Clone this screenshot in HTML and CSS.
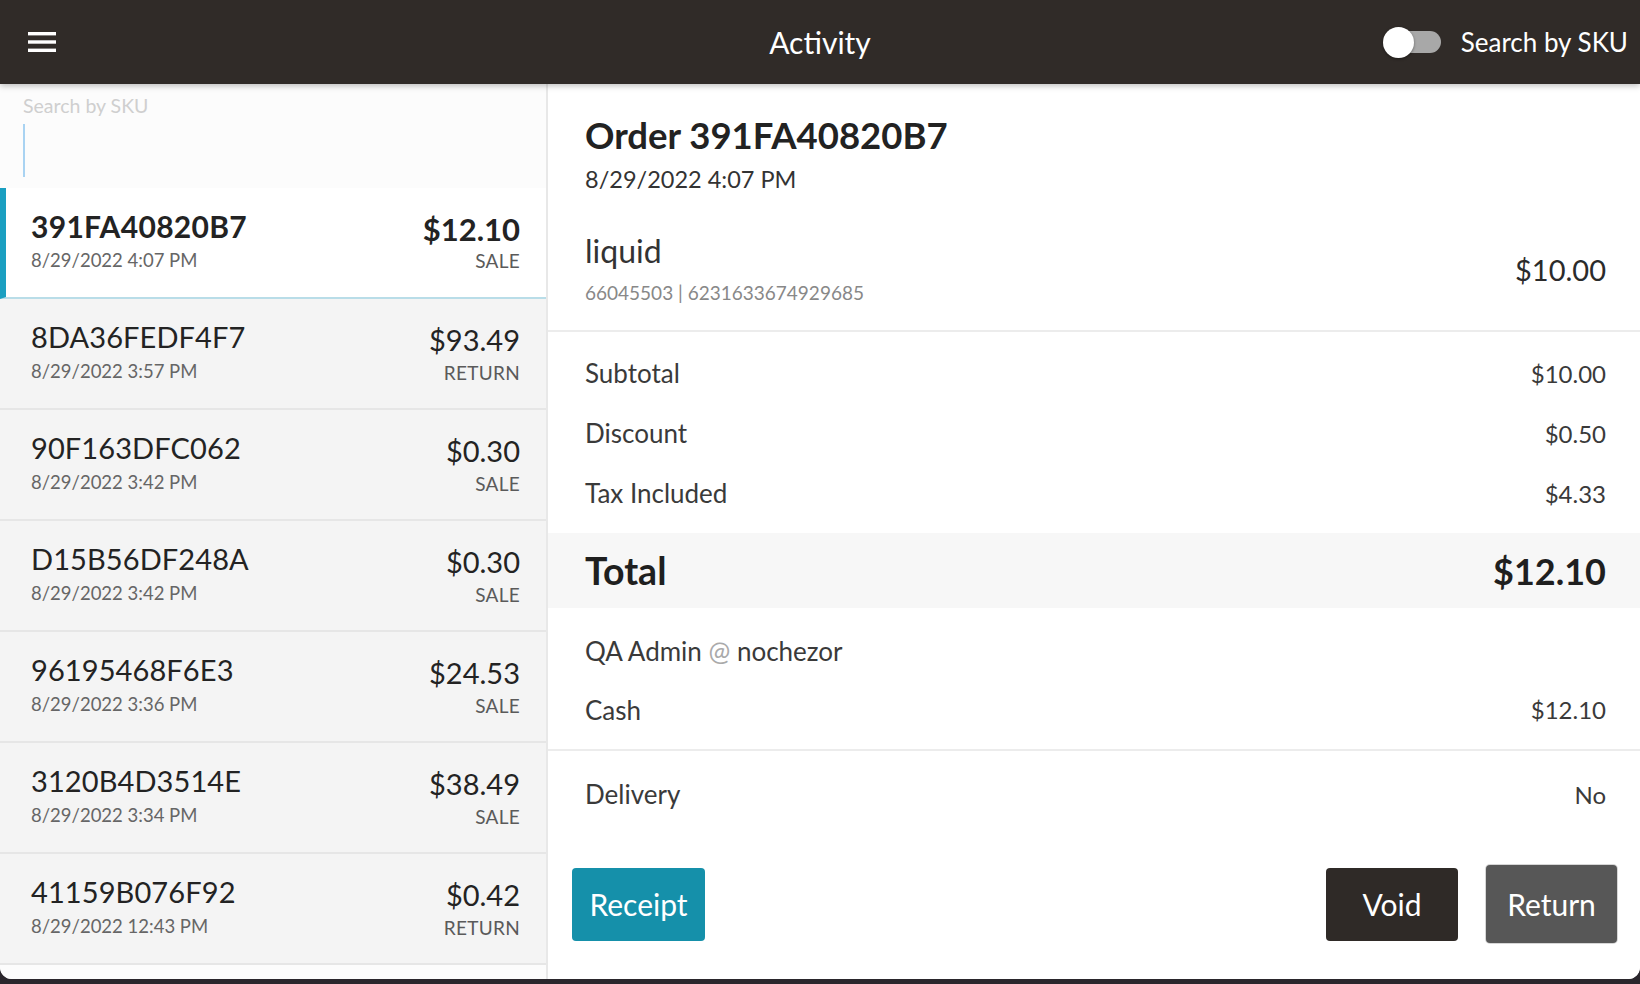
FILE: index.html
```html
<!DOCTYPE html>
<html lang="en">
<head>
<meta charset="utf-8">
<title>Activity</title>
<link rel="stylesheet" href="styles.css">
</head>
<body>
<div class="app">
  <header class="topbar">
    <div class="topbar-left">
      <svg class="hamburger" width="28" height="20" viewBox="0 0 28 20" aria-hidden="true">
        <rect x="0" y="0" width="28" height="3.4" fill="#fff"/>
        <rect x="0" y="8.3" width="28" height="3.4" fill="#fff"/>
        <rect x="0" y="16.6" width="28" height="3.4" fill="#fff"/>
      </svg>
    </div>
    <div class="topbar-title">Activity</div>
    <div class="topbar-right">
      <span class="toggle"><span class="toggle-knob"></span></span>
      <span class="toggle-label">Search by SKU</span>
    </div>
  </header>

  <main class="main">
    <aside class="sidebar">
      <div class="search">
        <div class="search-placeholder">Search by SKU</div>
        <div class="search-cursor"></div>
      </div>
      <ul class="orders">
        <li class="order selected">
          <div class="order-left">
            <div class="order-id">391FA40820B7</div>
            <div class="order-date">8/29/2022 4:07 PM</div>
          </div>
          <div class="order-right">
            <div class="order-amount">$12.10</div>
            <div class="order-type">SALE</div>
          </div>
        </li>
        <li class="order">
          <div class="order-left">
            <div class="order-id">8DA36FEDF4F7</div>
            <div class="order-date">8/29/2022 3:57 PM</div>
          </div>
          <div class="order-right">
            <div class="order-amount">$93.49</div>
            <div class="order-type">RETURN</div>
          </div>
        </li>
        <li class="order">
          <div class="order-left">
            <div class="order-id">90F163DFC062</div>
            <div class="order-date">8/29/2022 3:42 PM</div>
          </div>
          <div class="order-right">
            <div class="order-amount">$0.30</div>
            <div class="order-type">SALE</div>
          </div>
        </li>
        <li class="order">
          <div class="order-left">
            <div class="order-id">D15B56DF248A</div>
            <div class="order-date">8/29/2022 3:42 PM</div>
          </div>
          <div class="order-right">
            <div class="order-amount">$0.30</div>
            <div class="order-type">SALE</div>
          </div>
        </li>
        <li class="order">
          <div class="order-left">
            <div class="order-id">96195468F6E3</div>
            <div class="order-date">8/29/2022 3:36 PM</div>
          </div>
          <div class="order-right">
            <div class="order-amount">$24.53</div>
            <div class="order-type">SALE</div>
          </div>
        </li>
        <li class="order">
          <div class="order-left">
            <div class="order-id">3120B4D3514E</div>
            <div class="order-date">8/29/2022 3:34 PM</div>
          </div>
          <div class="order-right">
            <div class="order-amount">$38.49</div>
            <div class="order-type">SALE</div>
          </div>
        </li>
        <li class="order">
          <div class="order-left">
            <div class="order-id">41159B076F92</div>
            <div class="order-date">8/29/2022 12:43 PM</div>
          </div>
          <div class="order-right">
            <div class="order-amount">$0.42</div>
            <div class="order-type">RETURN</div>
          </div>
        </li>
      </ul>
    </aside>

    <section class="detail">
      <div class="detail-head">
        <h1 class="detail-title">Order 391FA40820B7</h1>
        <div class="detail-date">8/29/2022 4:07 PM</div>
      </div>

      <div class="item">
        <div class="item-info">
          <div class="item-name">liquid</div>
          <div class="item-sku">66045503 | 6231633674929685</div>
        </div>
        <div class="item-price">$10.00</div>
      </div>

      <div class="block summary">
        <div class="line"><span class="line-label">Subtotal</span><span class="line-value">$10.00</span></div>
        <div class="line"><span class="line-label">Discount</span><span class="line-value">$0.50</span></div>
        <div class="line"><span class="line-label">Tax Included</span><span class="line-value">$4.33</span></div>
      </div>

      <div class="total">
        <span>Total</span><span>$12.10</span>
      </div>

      <div class="block payment">
        <div class="line"><span class="line-label">QA Admin <span class="at">@</span> nochezor</span></div>
        <div class="line"><span class="line-label">Cash</span><span class="line-value">$12.10</span></div>
      </div>

      <div class="block delivery">
        <div class="line"><span class="line-label">Delivery</span><span class="line-value">No</span></div>
      </div>

      <div class="actions">
        <button class="btn btn-receipt">Receipt</button>
        <div class="actions-right">
          <button class="btn btn-void">Void</button>
          <button class="btn btn-return">Return</button>
        </div>
      </div>
    </section>
  </main>
</div>
</body>
</html>
```

FILE: styles.css
```css
* {
  box-sizing: border-box;
}

html, body {
  margin: 0;
  padding: 0;
}

body {
  width: 1640px;
  height: 984px;
  overflow: hidden;
  background: linear-gradient(#3d3843, #2a262c);
  font-family: Lato, "Open Sans", sans-serif;
  color: #2b2b2b;
}

.app {
  height: 979px;
  display: flex;
  flex-direction: column;
  background: #ffffff;
  border-radius: 0 0 12px 12px;
  overflow: hidden;
}

/* ---------- top bar ---------- */
.topbar {
  position: relative;
  z-index: 2;
  height: 84px;
  flex: none;
  display: grid;
  grid-template-columns: 1fr auto 1fr;
  align-items: center;
  background: #302b28;
  box-shadow: 0 2px 6px rgba(0, 0, 0, 0.25);
  color: #fff;
}

.topbar-left {
  padding-left: 28px;
  display: flex;
  align-items: center;
}

.hamburger {
  display: block;
}

.topbar-title {
  font-size: 30px;
  line-height: 36px;
  color: #fff;
}

.topbar-right {
  display: flex;
  justify-content: flex-end;
  align-items: center;
  padding-right: 12px;
  gap: 20px;
}

.toggle {
  width: 55px;
  height: 22px;
  border-radius: 11px;
  background: #a8a8a8;
  display: flex;
  align-items: center;
}

.toggle-knob {
  width: 31px;
  height: 31px;
  border-radius: 50%;
  background: #ffffff;
  margin-left: -3px;
  box-shadow: 0 1px 3px rgba(0, 0, 0, 0.4);
}

.toggle-label {
  font-size: 26px;
  line-height: 32px;
  color: #fff;
}

/* ---------- main ---------- */
.main {
  flex: 1;
  min-height: 0;
  display: flex;
}

/* ---------- sidebar ---------- */
.sidebar {
  width: 548px;
  flex: none;
  background: #fcfcfc;
  border-right: 2px solid #e8e8e8;
  overflow: hidden;
}

.search {
  height: 104px;
  padding: 10px 0 0 23px;
}

.search-placeholder {
  font-size: 19.5px;
  line-height: 24px;
  color: #cfcfcf;
}

.search-cursor {
  width: 2px;
  height: 53px;
  margin-top: 6px;
  background: #a9d3f2;
}

.orders {
  list-style: none;
  margin: 0;
  padding: 0;
}

.order {
  height: 111px;
  display: flex;
  justify-content: space-between;
  padding: 20px 26px 0 31px;
  background: #f4f4f4;
  border-bottom: 2px solid #e6e6e6;
}

.order.selected {
  background: #ffffff;
  border-left: 6px solid #1a9fc1;
  padding-left: 25px;
  border-bottom-color: #b9dde8;
}

.order-id {
  font-size: 29px;
  line-height: 36px;
  color: #232323;
  letter-spacing: 0.1px;
}

.selected .order-id {
  font-weight: 700;
  font-size: 30px;
  letter-spacing: 0.3px;
}

.order-date {
  margin-top: 4px;
  font-size: 18.5px;
  line-height: 24px;
  color: #666;
}

.order-right {
  text-align: right;
  padding-top: 3px;
}

.order-amount {
  font-size: 29px;
  line-height: 36px;
  color: #232323;
}

.selected .order-amount {
  font-weight: 700;
  font-size: 31px;
}

.order-type {
  margin-top: 3px;
  font-size: 19px;
  line-height: 24px;
  color: #5a5a5a;
  letter-spacing: 0.3px;
}

.selected .order-type {
  margin-top: 2px;
}

/* ---------- detail ---------- */
.detail {
  flex: 1;
  min-width: 0;
  display: flex;
  flex-direction: column;
  background: #ffffff;
}

.detail-head {
  padding: 29px 34px 0 37px;
}

.detail-title {
  margin: 0;
  font-size: 36.5px;
  line-height: 44px;
  font-weight: 700;
  color: #222;
}

.detail-date {
  margin-top: 7px;
  font-size: 23.5px;
  line-height: 30px;
  color: #333;
}

.item {
  display: flex;
  justify-content: space-between;
  align-items: center;
  padding: 38px 34px 25px 37px;
  border-bottom: 2px solid #ececec;
}

.item-name {
  font-size: 32px;
  line-height: 38px;
  color: #333;
}

.item-sku {
  margin-top: 11px;
  font-size: 19px;
  line-height: 24px;
  color: #888;
}

.item-price {
  font-size: 29px;
  line-height: 36px;
  color: #2b2b2b;
  margin-top: 2px;
}

.block {
  padding: 0 34px 0 37px;
}

.summary {
  padding-top: 11px;
  padding-bottom: 10px;
}

.payment {
  padding-top: 13px;
  padding-bottom: 10px;
  border-bottom: 2px solid #ececec;
}

.delivery {
  padding-top: 13px;
}

.line {
  height: 60px;
  display: flex;
  justify-content: space-between;
  align-items: center;
}

.payment .line {
  height: 59px;
}

.line-label {
  font-size: 26px;
  color: #3a3a3a;
}

.line-value {
  font-size: 24px;
  color: #3a3a3a;
}

.at {
  color: #aaa;
}

.total {
  height: 75px;
  display: flex;
  justify-content: space-between;
  align-items: center;
  padding: 0 34px 0 37px;
  background: #f7f7f7;
  font-size: 36px;
  font-weight: 700;
  color: #1f1f1f;
}

.total span:first-child {
  font-size: 37.5px;
}

.actions {
  margin-top: auto;
  display: flex;
  justify-content: space-between;
  align-items: center;
  padding: 0 23px 36px 24px;
}

.actions-right {
  display: flex;
  align-items: center;
  gap: 28px;
}

.btn {
  height: 73px;
  width: 132px;
  border: none;
  border-radius: 4px;
  font-family: Lato, "Open Sans", sans-serif;
  font-size: 30px;
  color: #ffffff;
  padding: 0;
}

.btn-receipt {
  width: 133px;
  background: #1590aa;
}

.btn-void {
  background: #2f2a27;
}

.btn-return {
  height: 78px;
  width: 131px;
  background: #575757;
  box-shadow: 0 0 0 1px #d6d6d6;
}
```
